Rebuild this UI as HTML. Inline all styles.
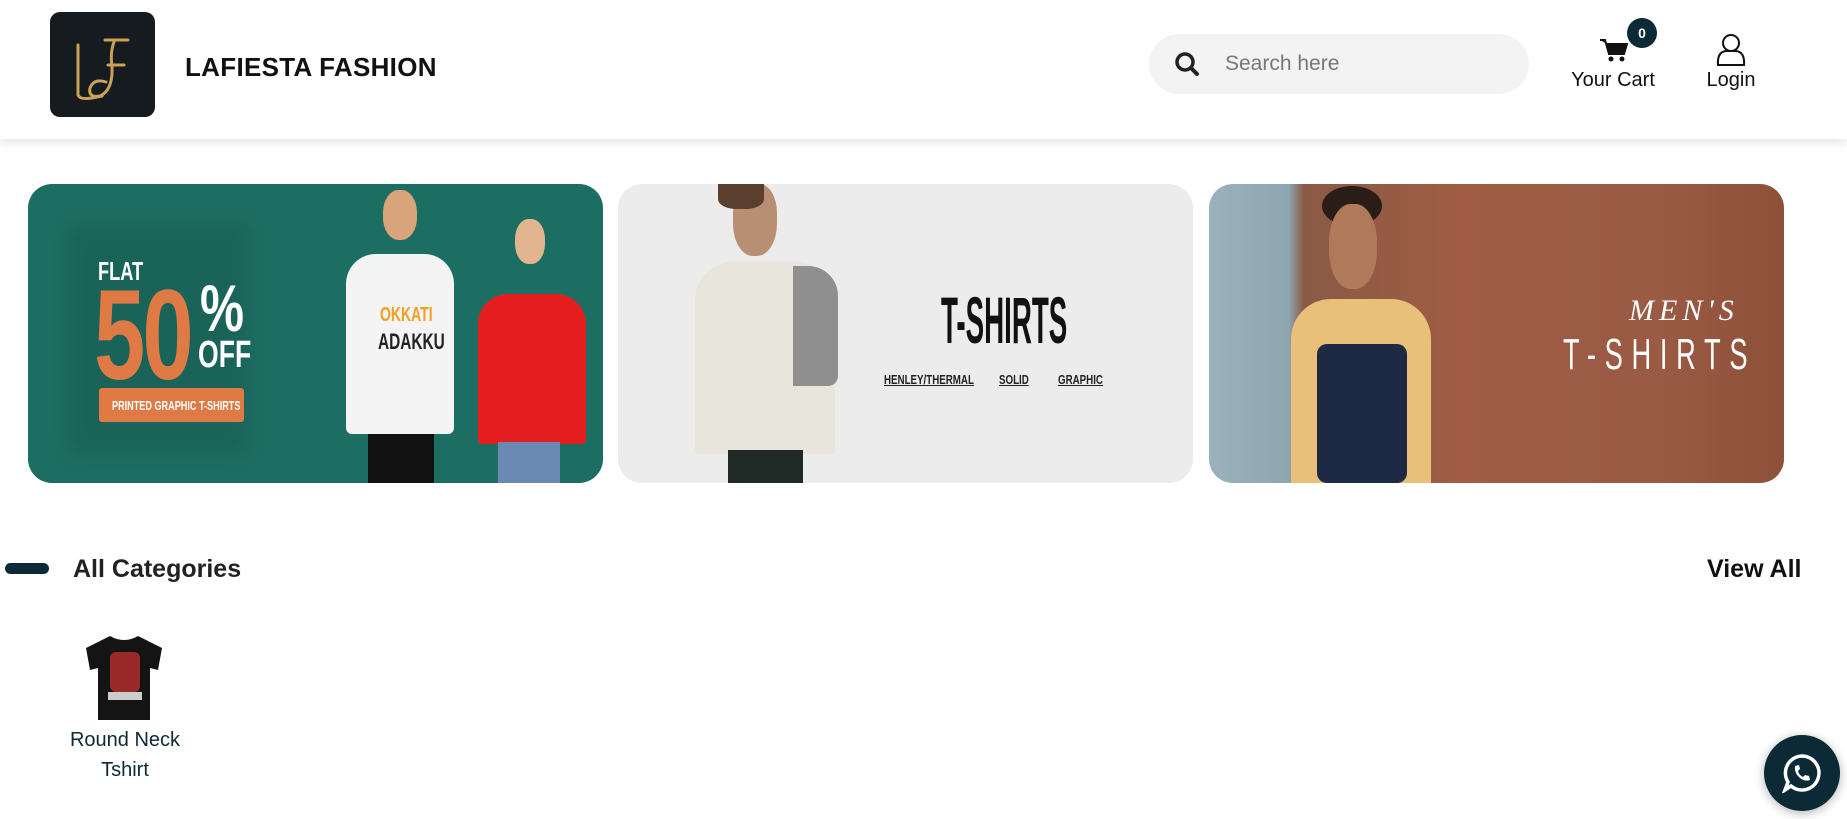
<!DOCTYPE html>
<html><head><meta charset="utf-8"><style>
*{margin:0;padding:0;box-sizing:border-box}
body{width:1847px;height:819px;background:#fff;font-family:"Liberation Sans",sans-serif;position:relative;overflow:hidden;color:#111}
.a{position:absolute}
header{position:absolute;left:0;top:0;width:1847px;height:139px;background:#fff;box-shadow:0 3px 10px rgba(0,0,0,.12)}
.logo{left:50px;top:12px;width:105px;height:105px;background:#161b20;border-radius:10px}
.brand{left:185px;top:52px;font-size:26px;font-weight:bold;letter-spacing:.3px}
.search{left:1149px;top:34px;width:380px;height:60px;background:#f3f3f3;border-radius:30px}
.ph{left:76px;top:18px;font-size:21px;color:#777}
.lbl{font-size:20px;color:#111;text-align:center}
.badge{left:1627px;top:18px;width:30px;height:30px;border-radius:50%;background:#0b2a36;color:#fff;font-size:14px;font-weight:bold;text-align:center;line-height:30px}
.ban{top:184px;height:299px;border-radius:24px;overflow:hidden}
.cond{transform-origin:left top;font-weight:bold;white-space:nowrap}
</style></head><body>
<header>
 <div class="a logo">
  <svg width="105" height="105" viewBox="0 0 105 105" fill="none" stroke="#c9a253" stroke-width="3" stroke-linecap="round">
   <path d="M28 33 V83 Q30 88 42 86 L52 84"/>
   <path d="M55 28 H78 M64 30 Q60 40 62 55 Q63 78 50 84 Q38 86 40 76 Q44 66 56 70"/>
   <path d="M58 53 H74"/>
  </svg>
 </div>
 <div class="a brand">LAFIESTA FASHION</div>
 <div class="a search">
  <svg class="a" style="left:25px;top:17px" width="26" height="26" viewBox="0 0 26 26"><circle cx="11" cy="11" r="8" fill="none" stroke="#222" stroke-width="3.5"/><path d="M17 17 L23 23" stroke="#222" stroke-width="4" stroke-linecap="round"/></svg>
  <div class="a ph">Search here</div>
 </div>
 <svg class="a" style="left:1599px;top:37px" width="30" height="26" viewBox="0 0 30 26"><path d="M1 3 H6 L10 17 H25 L28 7 H8" fill="#111" stroke="#111" stroke-width="2"/><circle cx="12" cy="22" r="2.5" fill="#111"/><circle cx="23" cy="22" r="2.5" fill="#111"/></svg>
 <div class="a badge">0</div>
 <div class="a lbl" style="left:1560px;top:69px;width:106px">Your Cart</div>
 <svg class="a" style="left:1715px;top:33px" width="32" height="34" viewBox="0 0 32 34" fill="none" stroke="#111" stroke-width="2"><circle cx="16" cy="10" r="8"/><path d="M3 32 Q2 19 11 18 H21 Q30 19 29 32 Z"/></svg>
 <div class="a lbl" style="left:1695px;top:69px;width:72px">Login</div>
</header>

<!-- banner 1 -->
<div class="a ban" style="left:28px;width:575px;background:#1d6e62">
 <div class="a" style="left:40px;top:40px;width:180px;height:230px;background:#1a6359;filter:blur(10px)"></div>
 <div class="a cond" style="left:70px;top:72px;font-size:26px;color:#fff;transform:scaleX(.7)">FLAT</div>
 <div class="a cond" style="left:66px;top:78px;font-size:128px;color:#e07a45;transform:scaleX(.72);letter-spacing:-4px">50</div>
 <div class="a cond" style="left:172px;top:86px;font-size:66px;color:#fff;transform:scaleX(.75)">%</div>
 <div class="a cond" style="left:170px;top:150px;font-size:38px;color:#fff;transform:scaleX(.7)">OFF</div>
 <div class="a" style="left:71px;top:204px;width:145px;height:34px;background:#e07a45;border-radius:3px"></div>
 <div class="a cond" style="left:84px;top:214px;font-size:13px;color:#fff;transform:scaleX(.7)">PRINTED GRAPHIC T-SHIRTS</div>
 <div class="a" style="left:355px;top:6px;width:34px;height:50px;background:#d9a47a;border-radius:45%"></div>
 <div class="a" style="left:318px;top:70px;width:108px;height:180px;background:#f4f4f4;border-radius:30px 30px 6px 6px"></div>
 <div class="a" style="left:340px;top:250px;width:66px;height:60px;background:#111"></div>
 <div class="a cond" style="left:352px;top:120px;font-size:20px;color:#f0a020;transform:scaleX(.7)">OKKATI</div>
 <div class="a cond" style="left:350px;top:145px;font-size:22px;color:#222;transform:scaleX(.7)">ADAKKU</div>
 <div class="a" style="left:487px;top:35px;width:30px;height:45px;background:#e0b590;border-radius:45%"></div>
 <div class="a" style="left:450px;top:110px;width:108px;height:150px;background:#e41e1e;border-radius:30px 30px 4px 4px"></div>
 <div class="a" style="left:470px;top:258px;width:62px;height:50px;background:#6a8ab3"></div>
</div>

<!-- banner 2 -->
<div class="a ban" style="left:618px;width:575px;background:#ececec">
 <div class="a" style="left:115px;top:0;width:44px;height:72px;background:#b98f74;border-radius:40% 40% 45% 45%"></div>
 <div class="a" style="left:100px;top:0;width:46px;height:25px;background:#5a3e2e;border-radius:0 0 40% 40%"></div>
 <div class="a" style="left:77px;top:78px;width:140px;height:192px;background:#e8e6dc;border-radius:38px 38px 4px 4px"></div>
 <div class="a" style="left:175px;top:82px;width:45px;height:120px;background:#8f8f8f;border-radius:0 30px 10px 0"></div>
 <div class="a" style="left:110px;top:266px;width:75px;height:40px;background:#1f2a26"></div>
 <div class="a cond" style="left:323px;top:98px;font-size:66px;color:#111;transform:scaleX(.42)">T-SHIRTS</div>
 <div class="a cond" style="left:266px;top:188px;font-size:13px;color:#222;transform:scaleX(.75);text-decoration:underline">HENLEY/THERMAL</div>
 <div class="a cond" style="left:381px;top:188px;font-size:13px;color:#222;transform:scaleX(.75);text-decoration:underline">SOLID</div>
 <div class="a cond" style="left:440px;top:188px;font-size:13px;color:#222;transform:scaleX(.75);text-decoration:underline">GRAPHIC</div>
</div>

<!-- banner 3 -->
<div class="a ban" style="left:1209px;width:575px;background:linear-gradient(90deg,#9bb2bc 0,#8da6b0 80px,#8a5a45 95px,#a05c44 250px,#9a5a44 450px,#8e5038 575px)">
 <div class="a" style="left:113px;top:2px;width:60px;height:40px;background:#2a1c16;border-radius:50%"></div>
 <div class="a" style="left:120px;top:20px;width:48px;height:85px;background:#b07a5a;border-radius:45%"></div>
 <div class="a" style="left:82px;top:115px;width:140px;height:184px;background:#e8c07a;border-radius:40px 40px 0 0"></div>
 <div class="a" style="left:108px;top:160px;width:90px;height:139px;background:#1e2a44;border-radius:10px"></div>
 <div class="a" style="left:420px;top:110px;font-size:30px;color:#fff;font-family:'Liberation Serif',serif;letter-spacing:5px;font-style:italic">MEN'S</div>
 <div class="a cond" style="left:354px;top:146px;font-size:44px;color:#fff;transform:scaleX(.62);letter-spacing:14px;font-weight:normal">T-SHIRTS</div>
</div>

<!-- categories -->
<div class="a" style="left:5px;top:563px;width:44px;height:11px;border-radius:6px;background:#0b2a36"></div>
<div class="a" style="left:73px;top:555px;font-size:25px;font-weight:bold;color:#222">All Categories</div>
<div class="a" style="left:1707px;top:555px;font-size:25px;font-weight:bold;color:#111">View All</div>

<svg class="a" style="left:82px;top:634px" width="84" height="88" viewBox="0 0 84 88"><path d="M28 2 Q42 10 56 2 L80 14 L76 36 L68 34 V86 H16 V34 L8 36 L4 14 Z" fill="#141414"/><rect x="28" y="18" width="30" height="40" rx="6" fill="#9a2a2a"/><rect x="26" y="58" width="34" height="8" fill="#ccc"/></svg>
<div class="a" style="left:45px;top:725px;width:160px;text-align:center;font-size:20px;color:#0b2a36;line-height:30px">Round Neck<br>Tshirt</div>

<div class="a" style="left:1764px;top:735px;width:76px;height:76px;border-radius:50%;background:#0b2a36;box-shadow:0 2px 10px rgba(0,0,0,.3)">
 <svg class="a" style="left:18px;top:18px" width="40" height="40" viewBox="0 0 40 40" fill="none" stroke="#fff" stroke-width="3.5"><path d="M20 3 A17 17 0 1 1 9 33 L3 37 L6 29 A17 17 0 0 1 20 3 Z"/><path d="M13 13 Q12 20 18 25 Q23 29 28 27 L27 23 L23 22 L21 24 Q17 22 16 18 L18 16 L17 12 Z" fill="#fff" stroke="none"/></svg>
</div>
</body></html>
